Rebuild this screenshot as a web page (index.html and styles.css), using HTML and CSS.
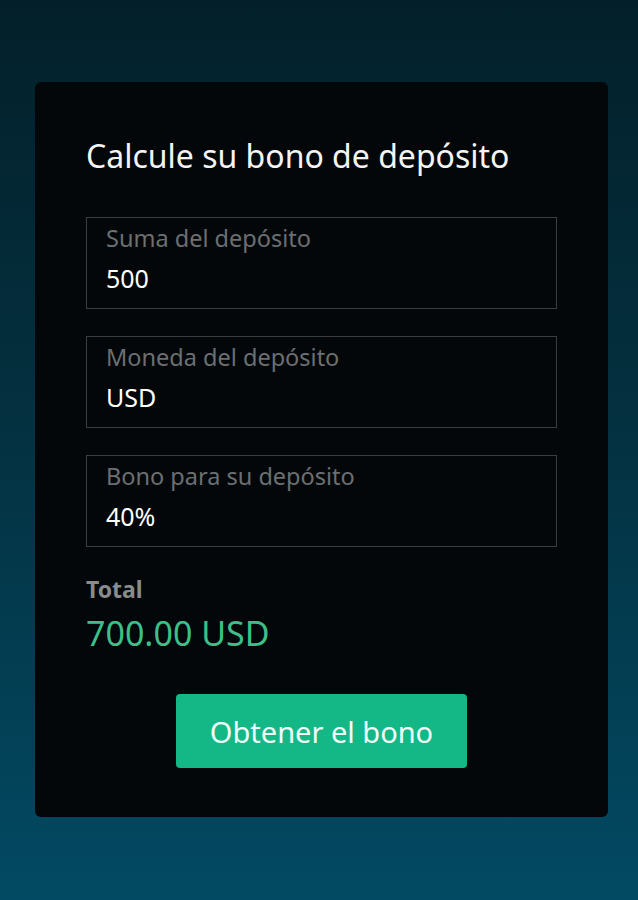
FILE: index.html
```html
<!DOCTYPE html>
<html lang="es">

<head>
    <meta charset="UTF-8">
    <meta name="viewport" content="width=device-width, initial-scale=1.0">
    <title>Calcule su bono de depósito</title>
    <link rel="stylesheet" href="styles.css">
</head>

<body>
    <div class="calculator">
        <h2 class="calc-title">Calcule su bono de depósito</h2>

        <div class="fields">
            <div class="field">
                <span class="field-label">Suma del depósito</span>
                <span class="field-value">500</span>
            </div>
            <div class="field">
                <span class="field-label">Moneda del depósito</span>
                <span class="field-value">USD</span>
            </div>
            <div class="field">
                <span class="field-label">Bono para su depósito</span>
                <span class="field-value">40%</span>
            </div>
        </div>

        <div class="total-label">Total</div>
        <div class="total-amount">700.00 USD</div>

        <div class="actions">
            <button class="bonus-btn">Obtener el bono</button>
        </div>
    </div>
</body>

</html>
```

FILE: styles.css
```css
html,
body {
    height: 100%;
}

body {
    margin: 0;
    font-family: "Noto Sans", "Open Sans", sans-serif;
    background: linear-gradient(180deg, #03202a 0%, #04303f 45%, #024a63 100%);
    overflow: hidden;
}

.calculator {
    box-sizing: border-box;
    width: 573px;
    height: 735px;
    margin: 82px 0 0 35px;
    padding: 54px 51px 0;
    background-color: #030709;
    border-radius: 6px;
}

.calc-title {
    margin: 0 0 41px;
    font-size: 32px;
    line-height: 40px;
    font-weight: 400;
    color: #f4f4f4;
}

.fields {
    display: flex;
    flex-direction: column;
    gap: 27px;
}

.field {
    box-sizing: border-box;
    height: 92px;
    padding: 6px 19px 0;
    border: 1px solid #3a3e41;
    display: flex;
    flex-direction: column;
}

.field-label {
    font-size: 23.5px;
    line-height: 28px;
    color: #6b6f72;
    margin-bottom: 11px;
}

.field-value {
    font-size: 25px;
    line-height: 30px;
    color: #ffffff;
}

.total-label {
    margin-top: 28px;
    font-size: 23px;
    line-height: 28px;
    font-weight: 700;
    color: #8a8b8c;
}

.total-amount {
    margin-top: 10px;
    font-size: 34px;
    line-height: 40px;
    color: #3dbf8a;
}

.actions {
    display: flex;
    justify-content: center;
    margin-top: 41px;
}

.bonus-btn {
    width: 291px;
    height: 74px;
    border: none;
    border-radius: 4px;
    background-color: #14b886;
    color: #f2fff9;
    font-family: inherit;
    font-size: 29px;
    cursor: pointer;
}

.bonus-btn:hover {
    background-color: #10a677;
}
```
